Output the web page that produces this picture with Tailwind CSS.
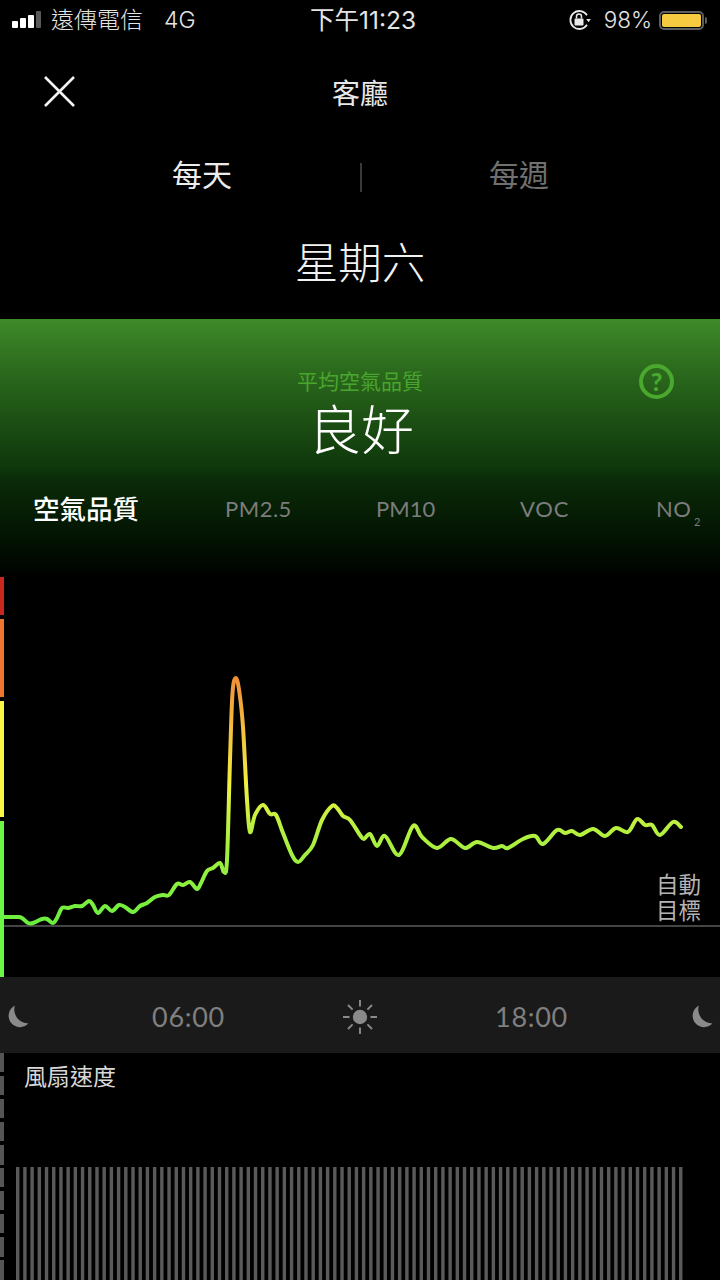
<!doctype html>
<html lang="zh-Hant">
<head>
<meta charset="utf-8">
<script src="https://cdn.jsdelivr.net/npm/@tailwindcss/browser@4"></script>
</head>
<body class="bg-black">
<div class="w-[720px] h-[1280px] overflow-hidden bg-black text-white flex flex-col font-['Lato','Noto_Sans_CJK_TC',sans-serif]">

  <!-- status bar -->
  <div class="relative h-10 flex items-center justify-between pl-3 pr-[13px] text-[#e4e4e4] font-['Inter','Noto_Sans_CJK_TC',sans-serif] text-[22.5px] font-light">
    <div class="flex items-center">
      <div class="flex items-end gap-[2px] h-[17px] mb-[2px]">
        <span class="w-[6px] h-[7px] rounded-[1px] bg-white"></span>
        <span class="w-[6px] h-[10px] rounded-[1px] bg-white"></span>
        <span class="w-[6px] h-[13px] rounded-[1px] bg-white"></span>
        <span class="w-[5px] h-[17px] rounded-[1px] bg-[#5a5a5a]"></span>
      </div>
      <span class="ml-[10px] text-[23px] leading-none">遠傳電信</span>
      <span class="ml-[21px] text-[23px] leading-none">4G</span>
    </div>
    <div class="absolute left-[310px] top-0 h-10 flex items-center text-[24.5px] font-normal whitespace-nowrap">下午11:23</div>
    <div class="flex items-center">
      <svg width="24" height="24" viewBox="0 0 24 24" class="mr-[12px]" fill="none">
        <path d="M19 7.2A9 9 0 1 0 19 16.8" stroke="#e8e8e8" stroke-width="1.8"/>
        <path d="M18.2 11h4.6l-2.3 3.2z" fill="#e8e8e8"/>
        <rect x="6.5" y="10.5" width="9" height="7" rx="1" fill="#e8e8e8"/>
        <path d="M8.5 10.5V8.6a2.5 2.5 0 0 1 5 0v1.9" stroke="#e8e8e8" stroke-width="1.5"/>
      </svg>
      <span class="leading-none mr-[7px]">98%</span>
      <div class="w-[45px] h-[19px] rounded-[5px] border-2 border-[#5e5e5e] p-[1px]">
        <div class="w-full h-full rounded-[2px] bg-[#f6cb3f]"></div>
      </div>
      <span class="w-[2px] h-[7px] ml-[1px] bg-[#5e5e5e] rounded-r-sm"></span>
    </div>
  </div>

  <!-- nav -->
  <div class="relative h-[104px] flex items-center justify-center">
    <svg width="34" height="34" viewBox="0 0 34 34" class="absolute left-[43px] top-[35px]" fill="none">
      <path d="M2 2L31 31M31 2L2 31" stroke="#f2f2f2" stroke-width="2.6"/>
    </svg>
    <span class="text-[28px] leading-none text-[#e8e8e8] pt-[2px]">客廳</span>
  </div>

  <!-- daily / weekly -->
  <div class="relative h-[62px] flex items-center justify-between pl-[172px] pr-[171px] text-[30px] leading-none">
    <span class="text-[#ececec] -mt-[2px]">每天</span>
    <span class="w-[2px] h-[29px] bg-[#3a3a3a] mt-[4px]"></span>
    <span class="text-[#707070] -mt-[2px]">每週</span>
  </div>

  <!-- day -->
  <div class="h-[113px] flex items-center justify-center pt-[1px]">
    <span class="text-[43.5px] leading-none font-light text-[#f2f2f2]">星期六</span>
  </div>

  <!-- summary -->
  <div class="relative h-[258px] bg-[linear-gradient(180deg,#3f8a29_0%,#2b6a1d_20%,#0e360b_58%,#0a2a08_63%,#021202_86%,#000_100%)]">
    <div class="flex flex-col items-center pt-[51px]">
      <span class="text-[21px] leading-[22px] text-[#49a52d]">平均空氣品質</span>
      <span class="text-[53px] leading-[60px] font-light mt-[8px] ml-[2px]">良好</span>
    </div>
    <div class="absolute left-[639px] top-[45px] w-[35px] h-[35px] rounded-full border-4 border-[#4aa82e] flex items-center justify-center text-[#4aa82e] text-[25px] font-black leading-none">?</div>
    <div class="absolute left-[33px] top-[174px] h-[32px] flex items-center text-[22px] leading-none text-[#7c7c7c] whitespace-nowrap">
      <span class="w-[106px] text-[26.5px] font-medium text-white">空氣品質</span>
      <span class="w-[66px] ml-[86px] tracking-[0.5px]">PM2.5</span>
      <span class="w-[60px] ml-[85px]">PM10</span>
      <span class="w-[50px] ml-[84px] tracking-[0.8px]">VOC</span>
      <span class="relative w-[45px] ml-[86px] tracking-[0.5px]">NO<span class="absolute right-0 bottom-[-7px] text-[11px]">2</span></span>
    </div>
  </div>

  <!-- chart -->
  <div class="relative h-[400px] flex">
    <div class="w-1 flex flex-col gap-[4px]">
      <span class="h-[38px] bg-[#c9281d]"></span>
      <span class="h-[78px] bg-[#ee7430]"></span>
      <span class="h-[116px] bg-[#fbf844]"></span>
      <span class="h-[156px] bg-[#6bf544]"></span>
    </div>
    <svg width="716" height="400" viewBox="4 577 716 400" fill="none" class="block">
      <defs>
        <linearGradient id="aq" gradientUnits="userSpaceOnUse" x1="0" y1="678" x2="0" y2="925">
          <stop offset="0" stop-color="#ef8f38"/>
          <stop offset="0.2" stop-color="#f3bd3e"/>
          <stop offset="0.43" stop-color="#f2f040"/>
          <stop offset="0.62" stop-color="#b5f040"/>
          <stop offset="1" stop-color="#68ee3e"/>
        </linearGradient>
      </defs>
      <path d="M4 926H720" stroke="#444" stroke-width="2"/>
      <path id="aq-line" stroke="url(#aq)" stroke-width="4" stroke-linecap="round" stroke-linejoin="round" d=""/>
    </svg>
    <div class="absolute right-[19px] top-[295px] text-[22.5px] leading-[26px] text-[#b4b4b4] text-center">自動<br>目標</div>
  </div>

  <!-- time axis -->
  <div class="h-[76px] bg-[#1a1a1a] flex items-center justify-between px-[6px] pt-[4px] text-[27px] text-[#7f7f7f] tracking-[0.7px]">
    <div class="w-6 flex justify-center -ml-[1px]">
      <svg width="24" height="24" viewBox="0 0 22 22" class="shrink-0"><path d="M9 .5A10.5 10.5 0 1 0 21.5 17A13 13 0 0 1 9 .5Z" fill="#8a8a8a"/></svg>
    </div>
    <div class="w-6 flex justify-center whitespace-nowrap">06:00</div>
    <div class="w-6 flex justify-center">
      <svg width="36" height="36" viewBox="0 0 36 36" class="shrink-0" fill="none">
        <circle cx="18" cy="18" r="7.2" fill="#8a8a8a"/>
        <path d="M18 1V7.5M18 28.5V35M1 18H7.5M28.5 18H35M6 6L10.6 10.6M25.4 25.4L30 30M30 6L25.4 10.6M10.6 25.4L6 30" stroke="#8a8a8a" stroke-width="1.9"/>
      </svg>
    </div>
    <div class="w-6 flex justify-center whitespace-nowrap">18:00</div>
    <div class="w-6 flex justify-center -mr-[1px]">
      <svg width="24" height="24" viewBox="0 0 22 22" class="shrink-0 -translate-x-[2px]"><path d="M9 .5A10.5 10.5 0 1 0 21.5 17A13 13 0 0 1 9 .5Z" fill="#8a8a8a"/></svg>
    </div>
  </div>

  <!-- fan speed -->
  <div class="relative flex-1 overflow-hidden">
    <div class="absolute left-0 top-0 bottom-0 w-1 bg-[repeating-linear-gradient(180deg,#555_0,#555_19.5px,transparent_19.5px,transparent_23px)]"></div>
    <div class="pl-6 pt-[9px] text-[23px] leading-[28px] text-[#d8d8d8]">風扇速度</div>
    <svg width="667" height="113" viewBox="0 0 667 113" fill="none" class="absolute left-4 top-[114px]">
      <path d="M0 56.5H667" stroke="#5a5a5a" stroke-width="113" stroke-dasharray="3.4 3.807"/>
    </svg>
  </div>
</div>

<script>
  var pts = [[4,917],[17,917],[22,918],[28,923],[33,923],[42,919],[47,919],[53,923],[57,918],[62,908],[68,908],[75,906],[82,906],[89,901],[93,905],[98,913],[105,906],[112,911],[119,905],[125,907],[133,912],[140,906],[147,903],[155,897],[163,895],[169,895],[177,884],[183,885],[190,882],[197,889],[201,883],[207,871],[213,868],[220,863],[224,872],[227,860],[230,760],[232.5,693],[236,678],[239.5,693],[243,727],[247,800],[250,832],[255,815],[263,805],[270,814],[276,815],[283,833],[292,855],[298,862],[305,855],[313,845],[322,820],[332,806],[337,808],[343,816],[350,820],[360,835],[364,839],[370,834],[377,846],[385,836],[399,855],[413,826],[422,837],[437,848],[451,839],[465,848],[477,842],[493,848],[502,846],[508,848],[523,839],[535,836],[543,844],[557,830],[565,833],[572,831],[580,835],[593,829],[605,836],[616,828],[628,832],[637,819],[645,825],[652,825],[660,835],[673,822],[681,827]];
  var d = 'M' + pts[0].join(' ');
  for (var i = 0; i < pts.length - 1; i++) {
    var p0 = pts[Math.max(i - 1, 0)], p1 = pts[i], p2 = pts[i + 1], p3 = pts[Math.min(i + 2, pts.length - 1)];
    d += ' C' + (p1[0] + (p2[0] - p0[0]) / 6) + ' ' + (p1[1] + (p2[1] - p0[1]) / 6) + ' ' + (p2[0] - (p3[0] - p1[0]) / 6) + ' ' + (p2[1] - (p3[1] - p1[1]) / 6) + ' ' + p2[0] + ' ' + p2[1];
  }
  document.getElementById('aq-line').setAttribute('d', d);
</script>
</body>
</html>
